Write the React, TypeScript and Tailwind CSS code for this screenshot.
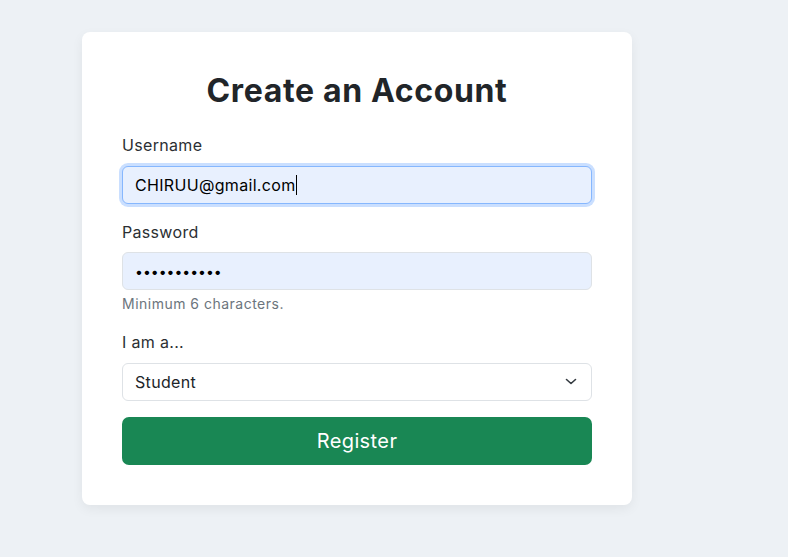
import React from "react";

export default function App() {
  return (
    <div
      className="min-h-[557px] w-full bg-[#edf1f5] pt-[32px] pl-[82px]"
      style={{ fontFamily: "Inter, 'Open Sans', sans-serif" }}
    >
      <div className="w-[550px] rounded-[8px] bg-white px-[40px] pt-[40px] pb-[40px] shadow-[0_4px_12px_rgba(0,0,0,0.06)]">
        <h1 className="mb-[23px] text-center text-[32px] leading-[38px] font-bold tracking-[0.02em] text-[#212529]">
          Create an Account
        </h1>

        <label className="mb-[9px] block text-[16px] leading-[24px] tracking-[0.02em] text-[#2b2f33]">Username</label>
        <div className="mb-[16px] flex h-[38px] items-center rounded-[6px] border border-[#86b7fe] bg-[#e8f0fe] px-[12px] text-[16px] tracking-[0.02em] text-black shadow-[0_0_0_3px_rgba(13,110,253,0.22)]">
          <span>CHIRUU@gmail.com</span>
          <span className="ml-[1px] inline-block h-[20px] w-[1px] bg-black" />
        </div>

        <label className="mb-[8px] block text-[16px] leading-[24px] tracking-[0.02em] text-[#2b2f33]">Password</label>
        <input
          type="password"
          defaultValue="abcdefghijk"
          readOnly
          className="block h-[38px] w-full rounded-[6px] border border-[#dee2e6] bg-[#e8f0fe] px-[12px] text-[14px] text-black outline-none"
        />
        <div className="mt-[4px] mb-[16px] text-[14px] leading-[20px] tracking-[0.035em] text-[#6c757d]">Minimum 6 characters.</div>

        <label className="mb-[9px] block text-[16px] leading-[24px] tracking-[0.02em] text-[#2b2f33]">I am a...</label>
        <div className="relative mb-[16px]">
          <select
            defaultValue="student"
            className="block h-[38px] w-full appearance-none rounded-[6px] border border-[#dee2e6] bg-white px-[12px] text-[16px] tracking-[0.02em] text-[#212529] outline-none"
            style={{ fontFamily: "Inter, 'Open Sans', sans-serif" }}
          >
            <option value="student">Student</option>
            <option value="teacher">Teacher</option>
          </select>
          <svg
            className="pointer-events-none absolute top-[14px] right-[15px]"
            width="12"
            height="9"
            viewBox="0 0 12 9"
            fill="none"
          >
            <path d="M1.5 2.5L6 6.5L10.5 2.5" stroke="#343a40" strokeWidth="1.6" strokeLinecap="round" strokeLinejoin="round" />
          </svg>
        </div>

        <button className="block h-[48px] w-full rounded-[7px] bg-[#198754] text-[20px] tracking-[0.02em] text-white">
          Register
        </button>
      </div>
    </div>
  );
}
